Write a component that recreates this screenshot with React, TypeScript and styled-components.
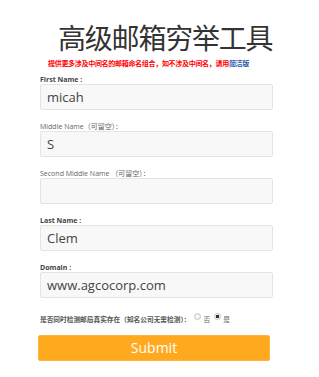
import React from 'react';
import styled, { createGlobalStyle } from 'styled-components';

const GlobalStyle = createGlobalStyle`
  body {
    margin: 0;
    background: #fff;
    font-family: "Open Sans", "Noto Sans CJK SC", sans-serif;
  }
`;

const Page = styled.div`
  width: 319px;
  display: flex;
  flex-direction: column;
`;

const Title = styled.h1`
  margin: 21px 0 0 58px;
  font-family: "Noto Sans CJK SC", sans-serif;
  font-weight: 400;
  font-size: 28px;
  line-height: 32px;
  letter-spacing: -1.2px;
  color: #333;
`;

const Notice = styled.p`
  margin: 6px 0 0 48px;
  font-family: "Noto Sans CJK SC", sans-serif;
  font-size: 7px;
  line-height: 9px;
  letter-spacing: -0.3px;
  font-weight: 700;
  color: #f00;
`;

const NoticeLink = styled.a`
  color: #2b5ba6;
  text-decoration: none;
`;

const Form = styled.form`
  display: flex;
  flex-direction: column;
  margin: 8px 0 0 40px;
  width: 233px;
`;

const Field = styled.div`
  display: flex;
  flex-direction: column;
  margin-bottom: 13px;
`;

const Label = styled.label<{ $strong?: boolean }>`
  font-family: "Open Sans", "Noto Sans CJK SC", sans-serif;
  font-size: 7px;
  line-height: 8px;
  height: 8px;
  white-space: nowrap;
  font-weight: ${(p) => (p.$strong ? 700 : 400)};
  color: ${(p) => (p.$strong ? '#444' : '#666')};
`;

const Input = styled.input`
  box-sizing: border-box;
  width: 233px;
  height: 26px;
  margin: 0;
  padding: 0 6px;
  border: 1px solid #e4e4e4;
  border-radius: 2px;
  background: #f8f8f8;
  font-family: "Open Sans", sans-serif;
  font-size: 13px;
  color: #444;
  outline: none;
`;

const CheckRow = styled.div`
  display: flex;
  align-items: center;
  margin-top: 1px;
  height: 14px;
  font-family: "Noto Sans CJK SC", sans-serif;
  font-size: 6.7px;
  font-weight: 700;
  color: #555;
  white-space: nowrap;
`;

const Option = styled.label`
  display: flex;
  align-items: center;
  margin-left: 4px;
  font-weight: 400;
  color: #666;
`;

const Radio = styled.input`
  appearance: none;
  width: 7px;
  height: 7px;
  margin: -5px 2px 0 0;
  border-radius: 50%;
  border: 1px solid #c4c4c4;
  background: radial-gradient(circle, #fff 0%, #e6e6e6 100%);
  box-sizing: border-box;
  &:checked {
    background: radial-gradient(circle, #333 0 1.6px, #f0f0f0 2px);
  }
`;

const Submit = styled.button`
  margin: 9px 0 0 -2px;
  width: 232px;
  height: 26px;
  border: 1px solid #ffb43a;
  border-radius: 2px;
  background: #ffa91f;
  color: #fff;
  font-family: "Open Sans", sans-serif;
  font-size: 14px;
  line-height: 24px;
  padding: 0;
  cursor: pointer;
`;

const fields = [
  { label: 'First Name :', value: 'micah', strong: true },
  { label: 'Middle Name（可留空）：', value: 'S', strong: false },
  { label: 'Second Middle Name （可留空）：', value: '', strong: false },
  { label: 'Last Name :', value: 'Clem', strong: true },
  { label: 'Domain :', value: 'www.agcocorp.com', strong: true },
];

export default function App() {
  return (
    <Page>
      <GlobalStyle />
      <Title>高级邮箱穷举工具</Title>
      <Notice>
        提供更多涉及中间名的邮箱命名组合，如不涉及中间名，请用
        <NoticeLink href="#">简洁版</NoticeLink>
      </Notice>
      <Form onSubmit={(e) => e.preventDefault()}>
        {fields.map((f) => (
          <Field key={f.label}>
            <Label $strong={f.strong}>{f.label}</Label>
            <Input defaultValue={f.value} />
          </Field>
        ))}
        <CheckRow>
          是否同时检测邮局真实存在（知名公司无需检测）：
          <Option>
            <Radio type="radio" name="check" value="0" />否
          </Option>
          <Option>
            <Radio type="radio" name="check" value="1" defaultChecked />是
          </Option>
        </CheckRow>
        <Submit type="submit">Submit</Submit>
      </Form>
    </Page>
  );
}
